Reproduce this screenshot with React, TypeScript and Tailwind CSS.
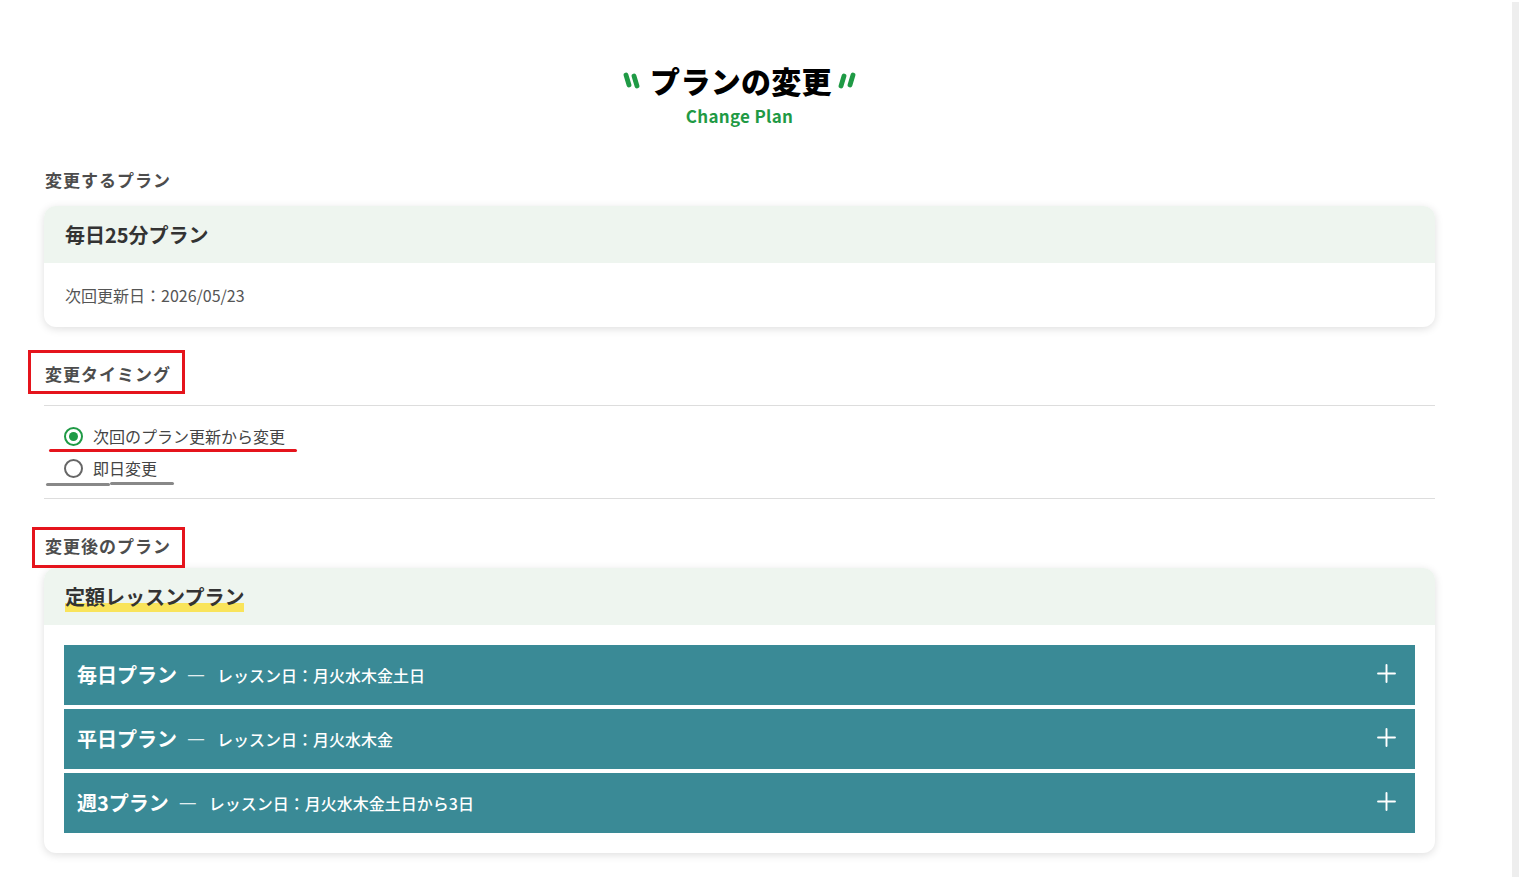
import { Plus } from "lucide-react";

const jp = { fontFamily: '"Noto Sans CJK JP", "Noto Sans", sans-serif' };

function QuoteMark({ side }: { side: "left" | "right" }) {
  const lines =
    side === "left"
      ? [
          [3, 3, 6, 13],
          [11, 4, 14, 14],
        ]
      : [
          [6, 4, 3, 14],
          [15, 3, 12, 13],
        ];
  return (
    <svg width="18" height="17" viewBox="0 0 18 17" className="shrink-0">
      {lines.map(([x1, y1, x2, y2], i) => (
        <line
          key={i}
          x1={x1}
          y1={y1}
          x2={x2}
          y2={y2}
          stroke="#1f9a45"
          strokeWidth="4.8"
          strokeLinecap="round"
        />
      ))}
    </svg>
  );
}

function SectionLabel({ children, boxed }: { children: string; boxed?: string }) {
  return (
    <div className="relative">
      <h2 className="text-[17px] leading-[24px] font-bold text-[#4d4d4d] pl-px tracking-[1px]">{children}</h2>
      {boxed && <div className={`absolute border-[3px] border-[#e5141c] pointer-events-none ${boxed}`} />}
    </div>
  );
}

const plans = [
  { name: "毎日プラン", days: "レッスン日：月火水木金土日" },
  { name: "平日プラン", days: "レッスン日：月火水木金" },
  { name: "週3プラン", days: "レッスン日：月火水木金土日から3日" },
];

export default function App() {
  return (
    <div className="flex min-h-[877px] bg-white" style={jp}>
      <main className="w-[1512px] shrink-0 pl-[44px] pb-[24px]">
        <div className="w-[1391px]">
          <div className="flex flex-col items-center pt-[58px]">
            <div className="flex items-center">
              <span className="mr-[9px]">
                <QuoteMark side="left" />
              </span>
              <h1 className="text-[30px] leading-[45px] font-black text-black tracking-[0.3px]">
                プランの変更
              </h1>
              <span className="ml-[6px]">
                <QuoteMark side="right" />
              </span>
            </div>
            <p className="mt-px text-[17px] leading-[24px] font-bold text-[#1f9a45] tracking-[0.3px]">
              Change Plan
            </p>
          </div>

          <div className="mt-[40px]">
            <SectionLabel>変更するプラン</SectionLabel>
          </div>

          <div className="mt-[14px] rounded-xl bg-white shadow-[0_2px_8px_rgba(0,0,0,0.13)] overflow-hidden">
            <div className="h-[57px] flex items-center px-[21px] bg-[#eef5ef]">
              <h3 className="text-[20px] font-bold text-[#333]">毎日25分プラン</h3>
            </div>
            <div className="h-[64px] flex items-center px-[21px]">
              <p className="text-[16px] text-[#555]">次回更新日：2026/05/23</p>
            </div>
          </div>

          <div className="mt-[35px]">
            <SectionLabel boxed="-left-[16px] -top-[12px] w-[157px] h-[44px]">変更タイミング</SectionLabel>
          </div>

          <div className="mt-[19px] border-t border-b border-[#dddddd] py-[14px]">
            <label className="relative flex items-center h-[32px] pl-[20px] gap-[10px]">
              <span className="w-[19px] h-[19px] rounded-full border-2 border-[#1f9a45] flex items-center justify-center">
                <span className="w-[9px] h-[9px] rounded-full bg-[#1f9a45]" />
              </span>
              <span className="text-[16px] text-[#444]">次回のプラン更新から変更</span>
              <span className="absolute left-[5px] top-[29px] w-[248px] h-[3px] rounded-full bg-[#e5141c]" />
            </label>
            <label className="relative flex items-center h-[32px] pl-[20px] gap-[10px]">
              <span className="w-[19px] h-[19px] rounded-full border-2 border-[#666]" />
              <span className="text-[16px] text-[#444]">即日変更</span>
              <span className="absolute left-[2px] top-[31px] w-[64px] h-[3px] rounded-full bg-[#888]" />
              <span className="absolute left-[66px] top-[30px] w-[64px] h-[3px] rounded-full bg-[#888]" />
            </label>
          </div>

          <div className="mt-[35px]">
            <SectionLabel boxed="-left-[12px] -top-[7px] w-[153px] h-[41px]">変更後のプラン</SectionLabel>
          </div>

          <div className="mt-[10px] rounded-xl bg-white shadow-[0_2px_8px_rgba(0,0,0,0.13)] overflow-hidden">
            <div className="h-[57px] flex items-center px-[21px] bg-[#eef5ef]">
              <h3 className="text-[20px] font-bold text-[#333] bg-[linear-gradient(transparent_70%,#f9e45b_70%)]">
                定額レッスンプラン
              </h3>
            </div>
            <div className="p-[20px] flex flex-col gap-[4px]">
              {plans.map((p) => (
                <button
                  key={p.name}
                  className="h-[60px] flex items-center justify-between bg-[#3a8a96] pl-[13px] pr-[14px] text-white text-left"
                >
                  <span className="flex items-center">
                    <span className="text-[20px] font-bold">{p.name}</span>
                    <span className="ml-[11px] text-[16px] text-white/85 font-['Liberation_Sans']">—</span>
                    <span className="ml-[13px] text-[16px] font-medium">{p.days}</span>
                  </span>
                  <Plus size={29} strokeWidth={1.6} className="mb-[4px]" />
                </button>
              ))}
            </div>
          </div>
        </div>
      </main>
      <div className="w-[7px] mt-[2px] bg-[#eeeeee]" />
    </div>
  );
}
